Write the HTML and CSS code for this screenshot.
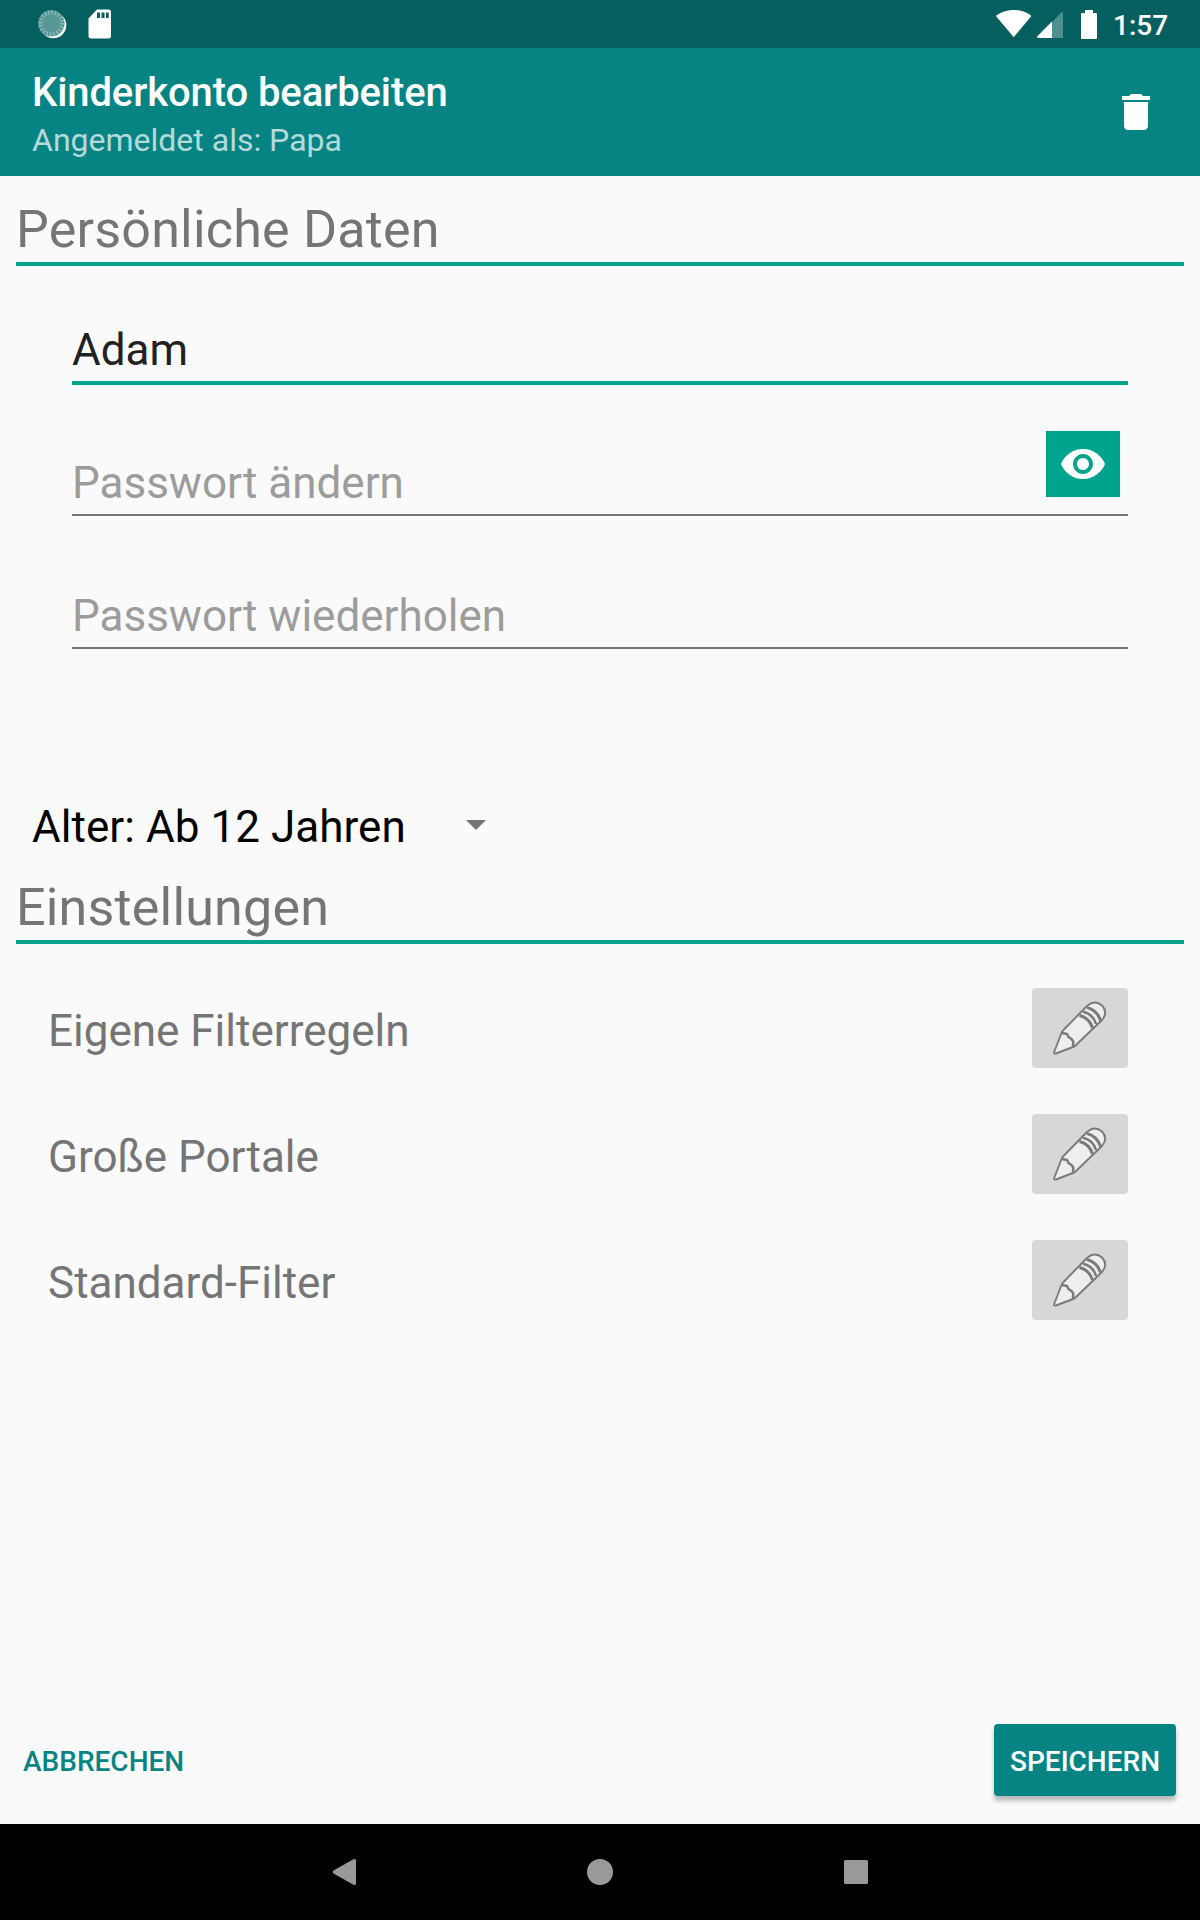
FILE: index.html
```html
<!DOCTYPE html>
<html lang="de">
<head>
<meta charset="utf-8">
<title>Kinderkonto bearbeiten</title>
<link rel="stylesheet" href="styles.css">
</head>
<body>

<svg class="defs">
	<symbol id="pencil" viewBox="0 0 54 54">
		<g fill="#eee" stroke="#7a7a7a" stroke-width="1.900" stroke-linejoin="round">
			<path d="M1.200 51 L8.500 32 Q9 30.500 10.500 29 L33.500 5.500 Q41.500 -2 49 4.500 Q55.500 11.500 49 19 L22.500 44.500 Q21.500 45.500 20 46 L3 52.500 Q0.700 53.200 1.200 51 Z"/>
			<g fill="none" stroke-width="2.500">
				<path d="M9 32 L14 33 L15.500 36 L18.500 38 L20.300 40.500 L20 45.500"/>
				<path d="M26.500 14.500 Q36.500 17 39.500 27" stroke-width="3"/>
				<path d="M30 10.800 Q40 13 43 23"/>
				<path d="M34 6.500 Q44 9 47.500 19.500" stroke-width="3"/>
			</g>
		</g>
	</symbol>
</svg>

<div class="statusbar">
	<svg class="icon-sync" width="29" height="29" viewBox="0 0 29 29">
		<circle cx="15.300" cy="15.300" r="13" fill="#fff"/>
		<circle cx="13.300" cy="13.300" r="13.200" fill="#589896"/>
		<circle cx="13.300" cy="13.300" r="10.800" fill="none" stroke="#a0c5c4" stroke-width="4" stroke-dasharray="1 2.393"/>
	</svg>
	<svg class="icon-sd" width="24" height="30" viewBox="0 0 24 30">
		<path fill="#fff" fill-rule="evenodd" d="M9 0.500H20.500Q23 0.500 23 3V27Q23 29.500 20.500 29.500H3Q0.500 29.500 0.500 27V9.500ZM9 3.500V9H12V3.500ZM13.500 3.500V9H16.500V3.500ZM18 3.500V9H20.700V3.500Z"/>
	</svg>
	<div class="status-right">
		<svg width="36" height="28" viewBox="0 0 36 28"><path fill="#fff" d="M18.500 26.300Q17.700 27.500 16.900 26.300L0.300 6.500Q0 5.600 0.900 5Q8.500 0 17.700 0T34.500 5Q35.400 5.600 35 6.500Z"/></svg>
		<svg class="icon-signal" width="26" height="26" viewBox="0 0 26 26">
			<path fill="#fff" fill-opacity=".3" d="M0 26L24.500 0.300Q26 -0.500 26 1V26Z"/>
			<path fill="#fff" d="M15 9.500V26H1Q-0.500 25.500 0.300 24.300Z"/>
		</svg>
		<svg class="icon-battery" width="16" height="29" viewBox="0 0 16 29"><path fill="#fff" d="M4 0H12V3H15Q16 3 16 4V28Q16 29 15 29H1Q0 29 0 28V4Q0 3 1 3H4Z"/></svg>
		<span class="clock">1:57</span>
	</div>
</div>

<div class="toolbar">
	<div>
		<h1 class="title">Kinderkonto bearbeiten</h1>
		<p class="subtitle">Angemeldet als: Papa</p>
	</div>
	<svg width="48" height="48" viewBox="0 0 24 24"><path fill="#fff" d="M6 19c0 1.100.9 2 2 2h8c1.100 0 2-.9 2-2V7H6v12zM19 4h-3.500l-1-1h-5l-1 1H5v2h14V4z"/></svg>
</div>

<div class="content">
	<h2 class="section">Persönliche Daten</h2>
	<div class="form">
		<div class="field active">Adam</div>
		<div class="field hint">
			<span>Passwort ändern</span>
			<div class="show-password">
				<svg width="48" height="48" viewBox="0 0 24 24"><path fill="#fff" d="M12 4.500C7 4.500 2.730 7.610 1 12c1.730 4.390 6 7.500 11 7.500s9.270-3.110 11-7.500c-1.730-4.390-6-7.500-11-7.500zM12 17c-2.760 0-5-2.240-5-5s2.240-5 5-5 5 2.240 5 5-2.240 5-5 5zm0-8c-1.660 0-3 1.340-3 3s1.340 3 3 3 3-1.340 3-3-1.340-3-3-3z"/></svg>
			</div>
		</div>
		<div class="field hint">Passwort wiederholen</div>
	</div>

	<div class="spinner">
		<span>Alter: Ab 12 Jahren</span>
		<svg width="20" height="10" viewBox="0 0 20 10"><path fill="#757575" d="M0 0H20L10 10Z"/></svg>
	</div>

	<h2 class="section">Einstellungen</h2>
	<div class="settings">
		<div class="setting">
			<span>Eigene Filterregeln</span>
			<div class="edit"><svg width="54" height="54"><use href="#pencil"/></svg></div>
		</div>
		<div class="setting">
			<span>Große Portale</span>
			<div class="edit"><svg width="54" height="54"><use href="#pencil"/></svg></div>
		</div>
		<div class="setting">
			<span>Standard-Filter</span>
			<div class="edit"><svg width="54" height="54"><use href="#pencil"/></svg></div>
		</div>
	</div>
</div>

<div class="actions">
	<div class="cancel">ABBRECHEN</div>
	<div class="save">SPEICHERN</div>
</div>

<div class="navbar">
	<svg width="26" height="28" viewBox="0 0 26 28"><path fill="#999" d="M22.500 1.200Q25 0.200 25 2.500V25.500Q25 27.800 22.500 26.800L2.500 15.500Q0.800 14 2.500 12.500Z"/></svg>
	<svg width="26" height="28" viewBox="0 0 26 28"><circle cx="13" cy="14" r="13" fill="#999"/></svg>
	<svg width="26" height="28" viewBox="0 0 26 28"><rect x="1" y="2" width="24" height="24" rx="1.500" fill="#999"/></svg>
</div>

</body>
</html>
```

FILE: styles.css
```css
* {
	box-sizing: border-box;
}

body {
	margin: 0;
	height: 1920px;
	display: flex;
	flex-direction: column;
	background: #fafafa;
	font-family: Roboto, sans-serif;
	overflow: hidden;
}

h1, h2, p {
	margin: 0;
	font-weight: 400;
}

svg {
	display: block;
	flex: none;
}

.defs {
	display: none;
}

.statusbar {
	flex: none;
	height: 48px;
	padding: 0 33px 0 38px;
	display: flex;
	align-items: center;
	background: #055f5f;
}

.icon-sd {
	margin-left: 21px;
}

.status-right {
	margin-left: auto;
	display: flex;
	align-items: center;
	color: #fff;
}

.icon-signal {
	margin: 2px 18px 0 5px;
}

.icon-battery {
	margin-right: 16px;
}

.clock {
	width: 54px;
	font-size: 28px;
	font-weight: 500;
	line-height: 32px;
	padding-top: 3px;
}

.toolbar {
	flex: none;
	height: 128px;
	padding: 21px 40px 0 32px;
	display: flex;
	justify-content: space-between;
	background: #068483;
}

.toolbar svg {
	margin-top: 19px;
}

.title {
	font-size: 40px;
	font-weight: 500;
	line-height: 48px;
	letter-spacing: -.1px;
	color: #fff;
}

.subtitle {
	margin-top: 3px;
	font-size: 32px;
	line-height: 40px;
	color: #b4dad9;
}

.content {
	flex: 1;
	padding: 16px 16px 0;
}

.section {
	height: 74px;
	border-bottom: 4px solid #00a38c;
	font-size: 52px;
	line-height: 76px;
	letter-spacing: .2px;
	color: #757575;
}

.form {
	padding: 0 56px;
}

.field {
	display: flex;
	justify-content: space-between;
	align-items: flex-end;
	height: 133px;
	padding-bottom: 5px;
	border-bottom: 2px solid #757575;
	font-size: 44px;
	line-height: 52px;
}

.field.active {
	height: 119px;
	border-bottom: 4px solid #00a38c;
	color: #212121;
}

.field.active + .field {
	height: 131px;
}

.hint {
	color: #9c9c9c;
}

.show-password {
	width: 74px;
	height: 66px;
	margin: 0 8px 12px 0;
	display: flex;
	align-items: center;
	justify-content: center;
	background: #00a38c;
}

.spinner {
	display: flex;
	align-items: center;
	gap: 60px;
	margin-top: 150px;
	padding-left: 16px;
	height: 56px;
	font-size: 44px;
	letter-spacing: .05px;
	color: #000;
}

.spinner svg {
	margin-bottom: 4px;
}

.spinner + .section {
	margin-top: 15px;
}

.settings {
	display: flex;
	flex-direction: column;
	gap: 46px;
	padding: 44px 56px 0 32px;
}

.setting {
	display: flex;
	align-items: center;
	justify-content: space-between;
	height: 80px;
	font-size: 44px;
	color: #757575;
}

.setting span {
	padding-top: 6px;
}

.edit {
	width: 96px;
	height: 80px;
	padding: 13px 0 0 21px;
	border-radius: 4px;
	background: #d6d8d7;
}

.actions {
	display: flex;
	align-items: center;
	justify-content: space-between;
	flex: none;
	height: 100px;
	padding: 0 24px 28px 23px;
	font-size: 28px;
	font-weight: 500;
}

.cancel {
	padding-top: 2px;
	color: #068483;
}

.save {
	width: 182px;
	height: 72px;
	border-radius: 4px;
	background: #068483;
	box-shadow: 0 5px 4px rgba(0, 0, 0, .25);
	color: #fff;
	text-align: center;
	line-height: 76px;
}

.navbar {
	flex: none;
	height: 96px;
	display: flex;
	align-items: center;
	justify-content: center;
	gap: 230px;
	background: #000;
}
```
